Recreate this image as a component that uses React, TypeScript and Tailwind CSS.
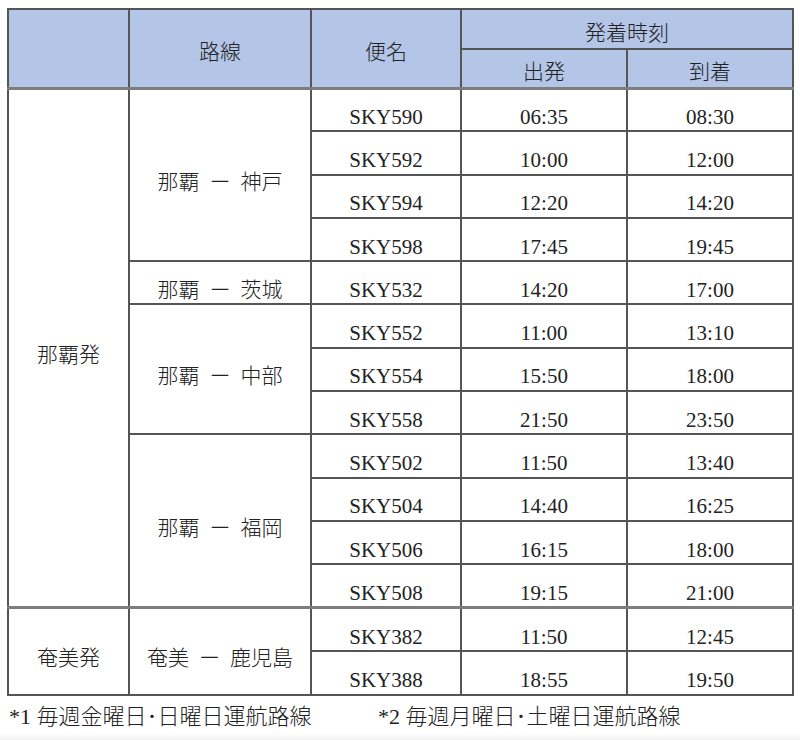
import React from "react";

type Flight = { no: string; dep: string; arr: string };
type Route = { from: string; to: string; flights: Flight[] };
type Section = { origin: string; routes: Route[] };

const sections: Section[] = [
  {
    origin: "那覇発",
    routes: [
      {
        from: "那覇",
        to: "神戸",
        flights: [
          { no: "SKY590", dep: "06:35", arr: "08:30" },
          { no: "SKY592", dep: "10:00", arr: "12:00" },
          { no: "SKY594", dep: "12:20", arr: "14:20" },
          { no: "SKY598", dep: "17:45", arr: "19:45" },
        ],
      },
      {
        from: "那覇",
        to: "茨城",
        flights: [{ no: "SKY532", dep: "14:20", arr: "17:00" }],
      },
      {
        from: "那覇",
        to: "中部",
        flights: [
          { no: "SKY552", dep: "11:00", arr: "13:10" },
          { no: "SKY554", dep: "15:50", arr: "18:00" },
          { no: "SKY558", dep: "21:50", arr: "23:50" },
        ],
      },
      {
        from: "那覇",
        to: "福岡",
        flights: [
          { no: "SKY502", dep: "11:50", arr: "13:40" },
          { no: "SKY504", dep: "14:40", arr: "16:25" },
          { no: "SKY506", dep: "16:15", arr: "18:00" },
          { no: "SKY508", dep: "19:15", arr: "21:00" },
        ],
      },
    ],
  },
  {
    origin: "奄美発",
    routes: [
      {
        from: "奄美",
        to: "鹿児島",
        flights: [
          { no: "SKY382", dep: "11:50", arr: "12:45" },
          { no: "SKY388", dep: "18:55", arr: "19:50" },
        ],
      },
    ],
  },
];

const cell = "border-2 border-[#555] text-center align-middle p-0 pt-[15px]";
const head = "border-2 border-[#555] bg-[#b4c6e7] text-center align-middle p-0 pt-[8px] font-light";
const headBottom = " border-b-[3px] border-b-[#7d7d7d]";

export default function App() {
  return (
    <div
      className="w-[800px] h-[740px] flex flex-col bg-white text-[#222] text-[21px] leading-none font-light"
      style={{ fontFamily: '"Liberation Serif", "Noto Sans CJK JP", serif' }}
    >
      <div className="pt-[8px] pl-[7px]">
        <table className="border-collapse table-fixed w-[785px]">
          <colgroup>
            <col className="w-[121px]" />
            <col className="w-[182px]" />
            <col className="w-[150px]" />
            <col className="w-[166px]" />
            <col className="w-[166px]" />
          </colgroup>
          <thead>
            <tr className="h-[40px]">
              <th rowSpan={2} className={head + headBottom}></th>
              <th rowSpan={2} className={head + headBottom}>路線</th>
              <th rowSpan={2} className={head + headBottom}>便名</th>
              <th colSpan={2} className={head}>発着時刻</th>
            </tr>
            <tr className="h-[39px]">
              <th className={head + headBottom}>出発</th>
              <th className={head + headBottom}>到着</th>
            </tr>
          </thead>
          <tbody>
            {sections.map((s, si) => {
              const total = s.routes.reduce((n, r) => n + r.flights.length, 0);
              const sep = si > 0 ? " border-t-[3px] border-t-[#7d7d7d]" : "";
              const rowH = si > 0 ? "h-[43.5px]" : "h-[43.3px]";
              return s.routes.map((r, ri) =>
                r.flights.map((f, fi) => {
                  const first = ri === 0 && fi === 0;
                  const rowSep = first ? sep : "";
                  return (
                    <tr key={s.origin + f.no} className={rowH}>
                      {first && (
                        <td rowSpan={total} className={cell + rowSep}>
                          {s.origin}
                        </td>
                      )}
                      {fi === 0 && (
                        <td rowSpan={r.flights.length} className={cell + rowSep}>
                          {r.from}
                          <span className="mx-[10px]">ー</span>
                          {r.to}
                        </td>
                      )}
                      <td className={cell + rowSep}>{f.no}</td>
                      <td className={cell + rowSep}>{f.dep}</td>
                      <td className={cell + rowSep}>{f.arr}</td>
                    </tr>
                  );
                })
              );
            })}
          </tbody>
        </table>
      </div>
      <div className="flex pl-[9px] pt-[10px] text-[22px]">
        <span className="w-[369px]">*1 毎週金曜日･日曜日運航路線</span>
        <span>*2 毎週月曜日･土曜日運航路線</span>
      </div>
      <div className="flex-1 mt-[6px] bg-gradient-to-b from-white to-[#f1f1f1]"></div>
    </div>
  );
}
